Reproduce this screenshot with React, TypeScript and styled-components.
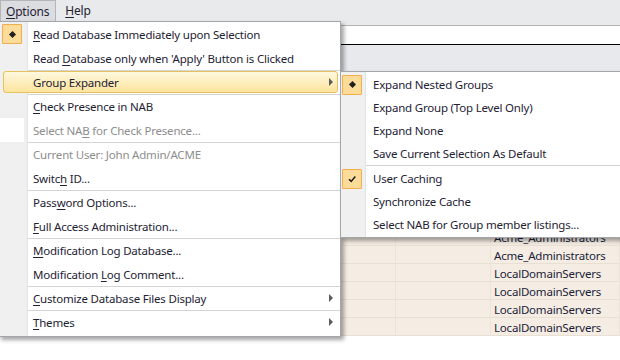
import React from "react";
import styled, { createGlobalStyle, css } from "styled-components";

const FONT = `"Noto Sans", "Open Sans", sans-serif`;

const GlobalStyle = createGlobalStyle`
  body { margin: 0; background: #fff; }
  * { box-sizing: border-box; }
`;

type Entry = {
  text: string;
  ak?: number;
  sep?: boolean;
  disabled?: boolean;
  mark?: "dot" | "check";
  sub?: boolean;
  hot?: boolean;
  blank?: boolean;
};

const mainItems: Entry[] = [
  { text: "Read Database Immediately upon Selection", ak: 0, mark: "dot" },
  { text: "Read Database only when 'Apply' Button is Clicked", ak: 5 },
  { text: "Group Expander", sep: true, sub: true, hot: true },
  { text: "Check Presence in NAB", ak: 0, sep: true },
  { text: "Select NAB for Check Presence...", ak: 9, disabled: true, blank: true },
  { text: "Current User: John Admin/ACME", sep: true, disabled: true },
  { text: "Switch ID...", ak: 5 },
  { text: "Password Options...", ak: 4, sep: true },
  { text: "Full Access Administration...", ak: 0 },
  { text: "Modification Log Database...", ak: 0, sep: true },
  { text: "Modification Log Comment...", ak: 13 },
  { text: "Customize Database Files Display", ak: 0, sep: true, sub: true },
  { text: "Themes", ak: 0, sep: true, sub: true },
];

const subTop: Entry[] = [
  { text: "Expand Nested Groups", mark: "dot" },
  { text: "Expand Group (Top Level Only)" },
  { text: "Expand None" },
  { text: "Save Current Selection As Default" },
];

const subBottom: Entry[] = [
  { text: "User Caching", mark: "check" },
  { text: "Synchronize Cache" },
  { text: "Select NAB for Group member listings..." },
];

const tableRows = [
  "Acme_Administrators",
  "Acme_Administrators",
  "LocalDomainServers",
  "LocalDomainServers",
  "LocalDomainServers",
  "LocalDomainServers",
];

const withKey = (text: string, ak?: number) =>
  ak === undefined ? (
    text
  ) : (
    <>
      {text.slice(0, ak)}
      <U>{text[ak]}</U>
      {text.slice(ak + 1)}
    </>
  );

const MenuList = ({
  items,
  gutter,
  rowHeight,
  indent,
}: {
  items: Entry[];
  gutter: number;
  rowHeight: number;
  indent: number;
}) => (
  <>
    {items.map((item, idx) => (
      <Row key={idx} $h={rowHeight} $sep={item.sep} $sepLeft={gutter + 1} $hot={item.hot}>
        <Cell $hot={item.hot} $disabled={item.disabled}>
          <IconSlot $w={item.hot ? gutter - 5 : gutter} $blank={item.blank}>
            {item.mark && (
              <CheckBox>
                {item.mark === "dot" ? (
                  <Diamond />
                ) : (
                  <svg width="10" height="10" viewBox="0 0 10 10">
                    <path d="M2 5.2 L4.2 7.4 L8.3 2.6" fill="none" stroke="#1f1f1f" strokeWidth="1.6" />
                  </svg>
                )}
              </CheckBox>
            )}
          </IconSlot>
          <Label $indent={indent}>{withKey(item.text, item.ak)}</Label>
          {item.sub && <SubArrow $hot={item.hot} />}
        </Cell>
      </Row>
    ))}
  </>
);

const App = () => (
  <Page>
    <GlobalStyle />
    <MenuBar>
      <BarItem $open>{withKey("Options", 0)}</BarItem>
      <BarItem>{withKey("Help", 0)}</BarItem>
    </MenuBar>
    <Strip />
    <Field />
    <Header />
    <Table>
      {tableRows.map((name, idx) => (
        <TRow key={idx}>
          <TCell />
          <TCell />
          <TCell>{name}</TCell>
        </TRow>
      ))}
    </Table>

    <MainMenu $gutter={28}>
      <MenuList items={mainItems} gutter={28} rowHeight={24} indent={6} />
    </MainMenu>

    <SubMenu $gutter={24}>
      <MenuList items={subTop} gutter={24} rowHeight={23} indent={8} />
      <Divider $left={25} />
      <MenuList items={subBottom} gutter={24} rowHeight={23} indent={8} />
    </SubMenu>
  </Page>
);

const Page = styled.div`
  position: relative;
  width: 620px;
  height: 360px;
  overflow: hidden;
  background: #fff;
  font-family: ${FONT};
  font-size: 11.5px;
  letter-spacing: -0.2px;
  color: #1e2233;
`;

const U = styled.span`
  text-decoration: underline;
  text-underline-offset: 2px;
`;

const MenuBar = styled.div`
  display: flex;
  height: 21px;
  background: #e9eaec;
`;

const BarItem = styled.div<{ $open?: boolean }>`
  height: 21px;
  display: flex;
  align-items: center;
  padding: 0 6px 0 9px;
  font-size: 12px;
  ${(p) =>
    p.$open &&
    css`
      background: #dcdde1;
      border: 1px solid #b3b5b8;
      border-bottom: none;
      padding: 0 6px 0 5px;
    `}
`;

const Strip = styled.div`
  height: 4px;
  background: #e9eaec;
`;

const Field = styled.div`
  height: 20px;
  background: #fff;
  border-top: 1px solid #b4b4b4;
  border-bottom: 1px solid #000;
`;

const Header = styled.div`
  height: 183px;
  background: #e8e9ec;
`;

const Table = styled.div`
  background: #f5ede3;
  color: #1b1d3a;
`;

const TRow = styled.div`
  display: grid;
  grid-template-columns: 396px 95px 1fr;
  height: 18px;
  border-bottom: 1px solid #e9e0d4;
`;

const TCell = styled.div`
  border-right: 1px solid #ece3d8;
  padding: 1px 0 0 3px;
  line-height: 17px;
  white-space: nowrap;
`;

const Menu = styled.div<{ $gutter: number }>`
  position: absolute;
  border: 1px solid #a3a6aa;
  background: linear-gradient(
    to right,
    #f0f0f0 0 ${(p) => p.$gutter}px,
    #e2e3e3 ${(p) => p.$gutter}px ${(p) => p.$gutter + 1}px,
    #fff ${(p) => p.$gutter + 1}px
  );
  box-shadow: 3px 3px 4px rgba(0, 0, 0, 0.35);
`;

const MainMenu = styled(Menu)`
  left: -2px;
  top: 21px;
  width: 343px;
  padding-bottom: 2px;
`;

const SubMenu = styled(Menu)`
  left: 340px;
  top: 71px;
  width: 300px;
  padding: 1px 0;
`;

const Row = styled.div<{ $h: number; $sep?: boolean; $sepLeft: number; $hot?: boolean }>`
  position: relative;
  display: flex;
  height: ${(p) => p.$h}px;
  ${(p) => p.$hot && css`padding: 1px 2px 1px 4px;`}
  ${(p) =>
    p.$sep &&
    css`
      &::before {
        content: "";
        position: absolute;
        top: 0;
        left: ${p.$sepLeft}px;
        right: 0;
        height: 1px;
        background: #d4d4d4;
      }
    `}
`;

const Cell = styled.div<{ $hot?: boolean; $disabled?: boolean }>`
  flex: 1;
  display: flex;
  align-items: center;
  min-width: 0;
  color: ${(p) => (p.$disabled ? "#8d8d8d" : "inherit")};
  ${(p) =>
    p.$hot &&
    css`
      background: linear-gradient(#fef8de, #fde49e);
      border: 1px solid #e6c25e;
      border-radius: 3px;
    `}
`;

const IconSlot = styled.div<{ $w: number; $blank?: boolean }>`
  width: ${(p) => p.$w}px;
  flex: none;
  align-self: stretch;
  display: flex;
  align-items: center;
  justify-content: center;
  padding-right: 2px;
  ${(p) => p.$blank && css`background: linear-gradient(to right, #fff 25px, transparent 25px);`}
`;

const CheckBox = styled.div`
  width: 20px;
  height: 20px;
  display: flex;
  align-items: center;
  justify-content: center;
  background: #fddb98;
  border: 1px solid #f0ae4e;
  border-radius: 1px;
`;

const Diamond = styled.span`
  width: 5px;
  height: 5px;
  background: #1f1f1f;
  transform: rotate(45deg);
`;

const Label = styled.span<{ $indent: number }>`
  flex: 1;
  padding: 1px 0 0 ${(p) => p.$indent}px;
  white-space: nowrap;
  line-height: 16px;
`;

const SubArrow = styled.span<{ $hot?: boolean }>`
  width: 0;
  height: 0;
  border-left: 4px solid #5c5c5c;
  border-top: 4px solid transparent;
  border-bottom: 4px solid transparent;
  margin-right: ${(p) => (p.$hot ? 4 : 7)}px;
`;

const Divider = styled.div<{ $left: number }>`
  height: 2px;
  margin-left: ${(p) => p.$left}px;
  border-top: 1px solid #d4d4d4;
  background: #fff;
`;

export default App;
